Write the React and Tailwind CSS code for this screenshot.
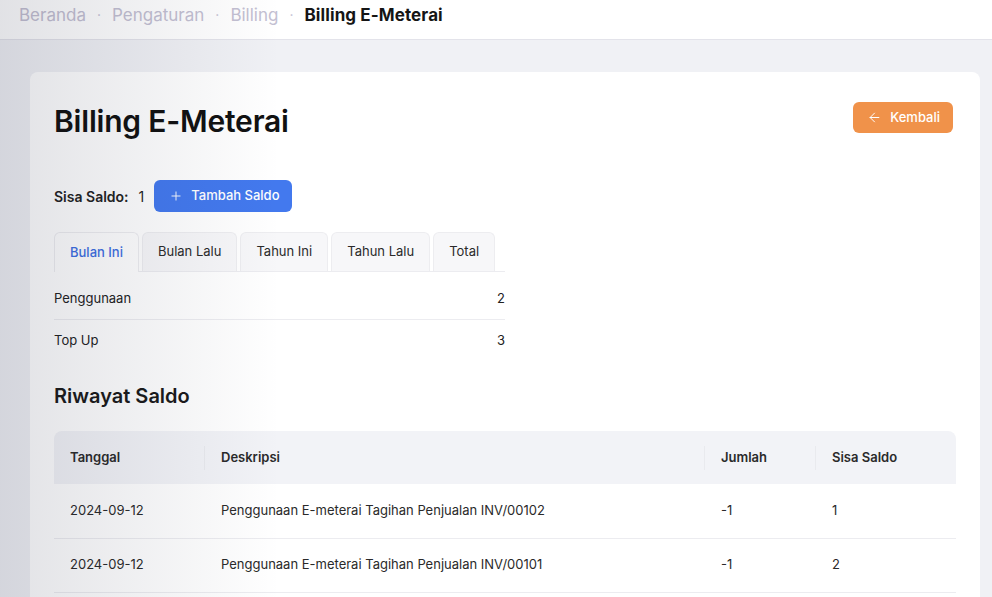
import { ArrowLeft, Plus } from "lucide-react";

const crumbs = ["Beranda", "Pengaturan", "Billing"];
const tabs = ["Bulan Ini", "Bulan Lalu", "Tahun Ini", "Tahun Lalu", "Total"];

const rows = [
  { date: "2024-09-12", desc: "Penggunaan E-meterai Tagihan Penjualan INV/00102", amount: "-1", saldo: "1" },
  { date: "2024-09-12", desc: "Penggunaan E-meterai Tagihan Penjualan INV/00101", amount: "-1", saldo: "2" },
];

export default function App() {
  return (
    <div className="relative h-[597px] overflow-hidden bg-[#f0f1f5] font-['Inter',sans-serif] text-[#1f1f1f]">
      <header className="h-10 bg-white border-b border-[#e3e3ea] flex items-center px-[19px] pb-[9px]">
        <nav className="flex items-center text-[17px] leading-none">
          {crumbs.map((c) => (
            <span key={c} className="flex items-center text-[#c3c0d2]">
              {c}
              <span className="mx-[11px] text-[14px]">·</span>
            </span>
          ))}
          <span className="font-bold text-[#151515] tracking-[0.1px]">Billing E-Meterai</span>
        </nav>
      </header>

      <main className="ml-[30px] mr-[12px] mt-8">
        <div className="bg-white rounded-lg px-6 pt-[30px] pb-6">
          <div className="flex items-start justify-between">
            <h1 className="text-[30px] font-semibold tracking-[-0.2px] leading-[38px] text-[#111]">Billing E-Meterai</h1>
            <button className="mr-[3px] flex items-center gap-2 h-[31px] pl-[14px] pr-[13px] rounded-md bg-[#f0924a] text-white text-[13px] font-medium">
              <ArrowLeft size={15} strokeWidth={1.6} />
              Kembali
            </button>
          </div>

          <div className="mt-[40px] flex items-center text-[14px]">
            <span className="font-semibold text-[#222]">Sisa Saldo:</span>
            <span className="ml-[10px]">1</span>
            <button className="ml-[10px] flex items-center gap-2 h-8 pl-[15px] pr-[12px] rounded-md bg-[#4379ee] text-white text-[13px] font-medium">
              <Plus size={14} strokeWidth={1.6} />
              Tambah Saldo
            </button>
          </div>

          <div className="mt-5 w-[451px]">
            <div className="flex gap-[3px] border-b border-[#ececf0] text-[13px]">
              {tabs.map((t, i) => (
                <button
                  key={t}
                  className={`px-[15px] rounded-t-md border border-b-0 border-[#ededf0] ${
                    i === 0 ? "bg-white text-[#3d6fe2] font-medium -mb-px h-10" : "bg-[#f7f7f9] text-[#2a2a2a] h-[39px]"
                  }`}
                >
                  {t}
                </button>
              ))}
            </div>
            <div className="text-[13px] text-[#222]">
              <div className="flex justify-between h-[48px] items-center border-b border-[#ececf0] pt-[6px]">
                <span>Penggunaan</span>
                <span>2</span>
              </div>
              <div className="flex justify-between h-[42px] items-center">
                <span>Top Up</span>
                <span>3</span>
              </div>
            </div>
          </div>

          <h2 className="mt-[22px] text-[20px] font-semibold text-[#1a1a1a] leading-6">Riwayat Saldo</h2>

          <table className="mt-[23px] w-full text-[13px] text-[#2a2a2a] border-collapse">
            <thead>
              <tr className="bg-[#f2f3f7] h-[53px] text-left">
                <th className="w-[151px] pl-4 font-semibold rounded-tl-lg">
                  <div className="border-r border-[#e9eaee] h-6 flex items-center">Tanggal</div>
                </th>
                <th className="w-[500px] pl-4 font-semibold">
                  <div className="border-r border-[#e9eaee] h-6 flex items-center">Deskripsi</div>
                </th>
                <th className="w-[111px] pl-4 font-semibold">
                  <div className="border-r border-[#e9eaee] h-6 flex items-center">Jumlah</div>
                </th>
                <th className="pl-4 font-semibold rounded-tr-lg">Sisa Saldo</th>
              </tr>
            </thead>
            <tbody>
              {rows.map((r, i) => (
                <tr key={i} className="h-[54px] border-b border-[#ececf0]">
                  <td className="pl-4">{r.date}</td>
                  <td className="pl-4">{r.desc}</td>
                  <td className="pl-4">{r.amount}</td>
                  <td className="pl-4">{r.saldo}</td>
                </tr>
              ))}
            </tbody>
          </table>
        </div>
      </main>

      <div className="pointer-events-none absolute inset-y-0 left-0 w-[280px] bg-gradient-to-r from-[#1b1f3a]/[0.13] to-transparent" />
    </div>
  );
}
